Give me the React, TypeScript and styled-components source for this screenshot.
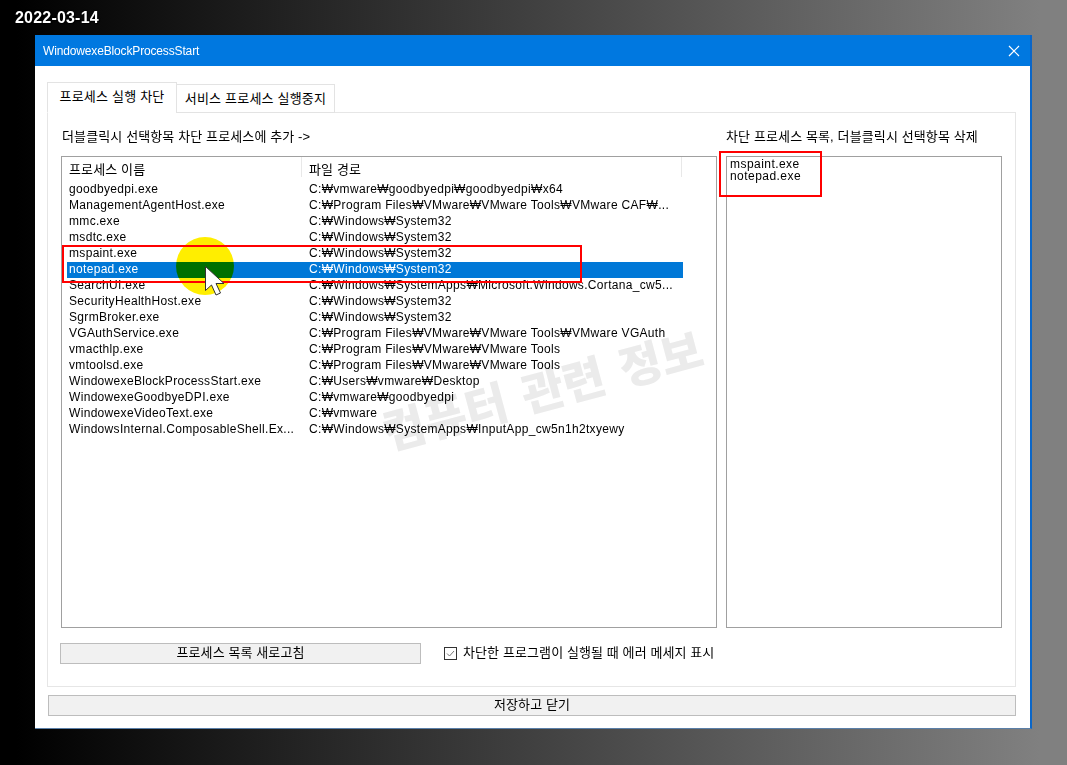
import React from "react";
import styled, { createGlobalStyle } from "styled-components";

const Global = createGlobalStyle`
  html, body { margin: 0; padding: 0; height: 100%; }
  body {
    width: 1067px; height: 765px; overflow: hidden;
    background: linear-gradient(90deg, #000 0px, #000 16px, #808080 1040px, #808080 1067px);
    font-family: "Liberation Sans", "Noto Sans CJK KR", sans-serif;
    font-size: 12px; color: #000;
  }
`;
const Page = styled.div`
  position: relative; width: 1067px; height: 765px;
  padding: 9px 0 0 15px; box-sizing: border-box; overflow: hidden;
`;
const DateStamp = styled.div`
  font: bold 16px/17px "Liberation Sans", sans-serif; color: #fff; height: 26px; letter-spacing: .2px;
  text-shadow: 0 0 2px #000, 1px 1px 0 #000;
`;
const Win = styled.div`
  width: 997px; height: 694px; margin-left: 20px; background: #fff; box-sizing: border-box;
  border-right: 2px solid #0a66c8; border-bottom: 1px solid #5a7fa8;
  display: flex; flex-direction: column;
`;
const TitleBar = styled.div`
  height: 31px; flex: none; background: #0078e0; color: #fff; display: flex; align-items: center;
  justify-content: space-between; padding: 0 10px 0 8px; font-size: 12px; letter-spacing: -.15px;
`;
const Body = styled.div`
  flex: 1; padding: 16px 14px 12px 12px; display: flex; flex-direction: column;
`;
const TabStrip = styled.div`display: flex; align-items: flex-end; height: 31px; position: relative; z-index: 1; margin-bottom: -1px;`;
const Tab = styled.div<{ $active?: boolean }>`
  box-sizing: border-box; height: ${p => (p.$active ? 31 : 29)}px; width: ${p => (p.$active ? 130 : 159)}px;
  margin-left: ${p => (p.$active ? 0 : -1)}px;
  border: 1px solid #e3e3e3; border-bottom: ${p => (p.$active ? "1px solid #fff" : "1px solid #e3e3e3")};
  background: #fff; text-align: center; line-height: 27px; letter-spacing: .2px; font-size: 13px;
`;
const Panel = styled.div`
  width: 969px; height: 575px; box-sizing: border-box; border: 1px solid #e6e6e6; padding: 15px 13px 0 14px;
  display: flex; flex-direction: column;
`;
const Columns = styled.div`display: flex; gap: 9px; height: 500px; margin-left: -1px;`;
const Col = styled.div<{ $w: number }>`width: ${p => p.$w}px; display: flex; flex-direction: column;`;
const Label = styled.div<{ $indent?: number }>`
  height: 28px; line-height: 18px; letter-spacing: .12px; font-size: 13px; padding-left: ${p => p.$indent ?? 0}px;
`;
const ListBox = styled.div`
  flex: 1; border: 1px solid #a0a0a0; box-sizing: border-box; background: #fff; position: relative;
`;
const Header = styled.div`display: flex; height: 25px; width: 620px;`;
const HeaderCell = styled.div<{ $w: number }>`
  width: ${p => p.$w}px; box-sizing: border-box; padding-left: 7px; line-height: 26px; letter-spacing: .12px; font-size: 13px;
  border-right: 1px solid #e8e8e8; height: 20px;
`;
const Row = styled.div<{ $sel?: boolean }>`
  display: flex; height: 16px; line-height: 15px; margin-left: 5px; width: 616px; letter-spacing: .32px;
  background: ${p => (p.$sel ? "#0078d7" : "transparent")}; color: ${p => (p.$sel ? "#fff" : "#000")};
`;
const NameCell = styled.div`width: 242px; padding-left: 2px; box-sizing: border-box; white-space: nowrap; overflow: hidden;`;
const PathCell = styled.div`flex: 1; white-space: nowrap; overflow: hidden;`;
const SideItem = styled.div`height: 12px; line-height: 12px; padding-left: 3px; letter-spacing: .45px;`;
const SideList = styled.div`padding-top: 1px;`;
const Controls = styled.div`display: flex; align-items: center; margin-top: 15px; margin-left: -2px;`;
const Btn = styled.div<{ $w: number }>`
  width: ${p => p.$w}px; height: 21px; box-sizing: border-box; background: #f1f1f1; border: 1px solid #bdbdbd;
  text-align: center; line-height: 17px; letter-spacing: .1px; font-size: 13px; flex: none;
`;
const CheckRow = styled.div`display: flex; align-items: center; margin-left: 23px; letter-spacing: .1px; gap: 6px; font-size: 13px; line-height: 18px;`;
const CheckText = styled.span`padding-bottom: 2px;`;
const FooterBtn = styled(Btn)`margin: 8px 0 0 1px;`;
const Mark = styled.div<{ $x: number; $y: number; $w: number; $h: number }>`
  position: absolute; left: ${p => p.$x}px; top: ${p => p.$y}px; width: ${p => p.$w}px; height: ${p => p.$h}px;
  border: 2px solid #f00; box-sizing: border-box; pointer-events: none;
`;
const Spot = styled.div`
  position: absolute; left: 176px; top: 237px; width: 58px; height: 58px; border-radius: 50%;
  background: #ffee00; mix-blend-mode: multiply;
`;
const CursorWrap = styled.svg`position: absolute; left: 204px; top: 265px;`;
const Watermark = styled.div`
  position: absolute; left: 352px; top: 356px; width: 380px; height: 64px; text-align: center;
  font: 900 46px/64px "Noto Sans CJK KR", sans-serif; color: #ebebeb;
  transform: rotate(-15deg); mix-blend-mode: multiply; white-space: nowrap; word-spacing: 6px;
`;

const rows: [string, string][] = [
  ["goodbyedpi.exe", "C:₩vmware₩goodbyedpi₩goodbyedpi₩x64"],
  ["ManagementAgentHost.exe", "C:₩Program Files₩VMware₩VMware Tools₩VMware CAF₩..."],
  ["mmc.exe", "C:₩Windows₩System32"],
  ["msdtc.exe", "C:₩Windows₩System32"],
  ["mspaint.exe", "C:₩Windows₩System32"],
  ["notepad.exe", "C:₩Windows₩System32"],
  ["SearchUI.exe", "C:₩Windows₩SystemApps₩Microsoft.Windows.Cortana_cw5..."],
  ["SecurityHealthHost.exe", "C:₩Windows₩System32"],
  ["SgrmBroker.exe", "C:₩Windows₩System32"],
  ["VGAuthService.exe", "C:₩Program Files₩VMware₩VMware Tools₩VMware VGAuth"],
  ["vmacthlp.exe", "C:₩Program Files₩VMware₩VMware Tools"],
  ["vmtoolsd.exe", "C:₩Program Files₩VMware₩VMware Tools"],
  ["WindowexeBlockProcessStart.exe", "C:₩Users₩vmware₩Desktop"],
  ["WindowexeGoodbyeDPI.exe", "C:₩vmware₩goodbyedpi"],
  ["WindowexeVideoText.exe", "C:₩vmware"],
  ["WindowsInternal.ComposableShell.Ex...", "C:₩Windows₩SystemApps₩InputApp_cw5n1h2txyewy"],
];

export default function App() {
  return (
    <Page>
      <Global />
      <DateStamp>2022-03-14</DateStamp>
      <Win>
        <TitleBar>
          <span>WindowexeBlockProcessStart</span>
          <svg width="12" height="12" viewBox="0 0 12 12" fill="none" stroke="#fff" strokeWidth="1.2">
            <path d="M1 1l10 10M11 1L1 11" />
          </svg>
        </TitleBar>
        <Body>
          <TabStrip>
            <Tab $active>프로세스 실행 차단</Tab>
            <Tab>서비스 프로세스 실행중지</Tab>
          </TabStrip>
          <Panel>
            <Columns>
              <Col $w={656}>
                <Label $indent={1}>더블클릭시 선택항목 차단 프로세스에 추가 -&gt;</Label>
                <ListBox>
                  <Header>
                    <HeaderCell $w={240}>프로세스 이름</HeaderCell>
                    <HeaderCell $w={380}>파일 경로</HeaderCell>
                  </Header>
                  {rows.map(([n, p]) => (
                    <Row key={n} $sel={n === "notepad.exe"}>
                      <NameCell>{n}</NameCell>
                      <PathCell>{p}</PathCell>
                    </Row>
                  ))}
                </ListBox>
              </Col>
              <Col $w={276}>
                <Label>차단 프로세스 목록, 더블클릭시 선택항목 삭제</Label>
                <ListBox>
                  <SideList>
                    <SideItem>mspaint.exe</SideItem>
                    <SideItem>notepad.exe</SideItem>
                  </SideList>
                </ListBox>
              </Col>
            </Columns>
            <Controls>
              <Btn $w={361}>프로세스 목록 새로고침</Btn>
              <CheckRow>
                <svg width="13" height="13" viewBox="0 0 13 13" fill="none">
                  <rect x=".5" y=".5" width="12" height="12" fill="#fff" stroke="#333" />
                  <path d="M3 6.5l2.5 2.5L10 4" stroke="#777" strokeWidth="1" />
                </svg>
                <CheckText>차단한 프로그램이 실행될 때 에러 메세지 표시</CheckText>
              </CheckRow>
            </Controls>
          </Panel>
          <FooterBtn $w={968}>저장하고 닫기</FooterBtn>
        </Body>
      </Win>
      <Watermark>컴퓨터 관련 정보</Watermark>
      <Spot />
      <Mark $x={62} $y={245} $w={520} $h={38} />
      <Mark $x={719} $y={151} $w={103} $h={46} />
      <CursorWrap width="24" height="32" viewBox="0 0 24 32">
        <path d="M1.5 1.5v24l6-5.5 4.5 10 4.5-2-4.5-9.5h8z" fill="#fff" stroke="#333" strokeWidth="1" />
      </CursorWrap>
    </Page>
  );
}
